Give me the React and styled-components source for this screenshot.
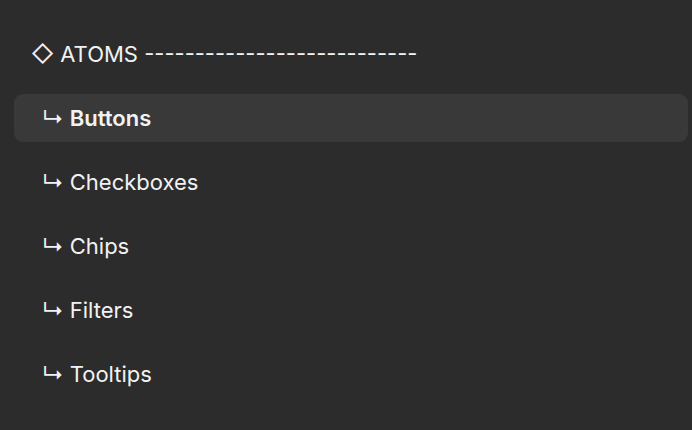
import React from 'react';
import styled, { createGlobalStyle } from 'styled-components';

const GlobalStyle = createGlobalStyle`
  html, body {
    margin: 0;
    padding: 0;
    background: #2c2c2c;
  }
  body {
    font-family: Inter, "Noto Sans", sans-serif;
  }
`;

const items = ['Buttons', 'Checkboxes', 'Chips', 'Filters', 'Tooltips'];

function App() {
  return (
    <>
      <GlobalStyle />
      <StPanel>
        <StHeader>◇ ATOMS ---------------------------</StHeader>
        {items.map((name, i) => (
          <StRow key={name} active={i === 0}>
            <StArrow>↳</StArrow>
            {name}
          </StRow>
        ))}
      </StPanel>
    </>
  );
}

export default App;

const StPanel = styled.div`
  width: 692px;
  height: 430px;
  box-sizing: border-box;
  padding: 30px 4px 0 14px;
  display: flex;
  flex-direction: column;
  gap: 16px;
  overflow: hidden;
`;

const StHeader = styled.div`
  height: 48px;
  display: flex;
  align-items: center;
  padding-left: 17px;
  color: #f2f2f2;
  font-size: 22px;
  white-space: pre;
`;

const StRow = styled.div.withConfig({
  shouldForwardProp: (p) => p !== 'active',
})`
  height: 48px;
  box-sizing: border-box;
  display: flex;
  align-items: center;
  padding-left: 28px;
  border-radius: 9px;
  color: #f2f2f2;
  font-size: 22px;
  font-weight: ${(p) => (p.active ? 600 : 400)};
  background: ${(p) => (p.active ? '#393939' : 'transparent')};
`;

const StArrow = styled.span`
  font-weight: 400;
  margin-right: 6px;
`;
